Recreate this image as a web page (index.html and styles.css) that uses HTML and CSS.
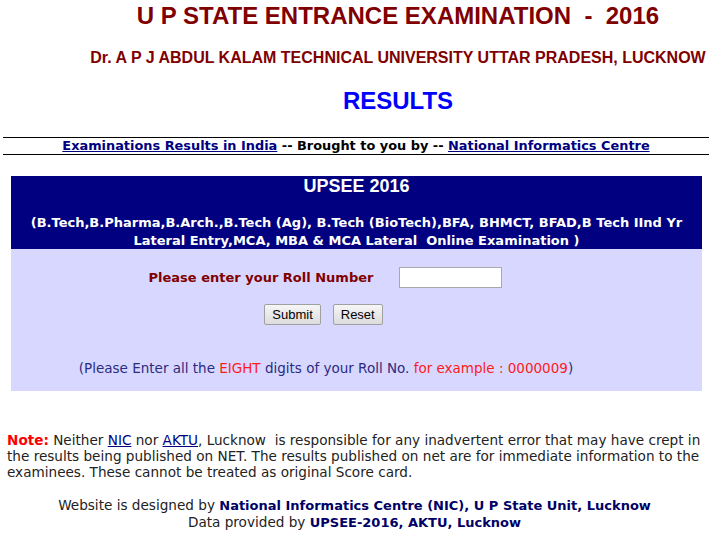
FILE: index.html
```html
<!DOCTYPE html>
<html>
<head>
<meta charset="utf-8">
<title>UPSEE 2016 Results</title>
<link rel="stylesheet" href="styles.css">
</head>
<body>
<div class="page">
  <header class="masthead">
    <h1 class="title">U P STATE ENTRANCE EXAMINATION &nbsp;-&nbsp; 2016</h1>
    <h2 class="subtitle">Dr. A P J ABDUL KALAM TECHNICAL UNIVERSITY UTTAR PRADESH, LUCKNOW</h2>
    <h3 class="results">RESULTS</h3>
  </header>

  <div class="ribbon">
    <a href="#" class="navlink">Examinations Results in India</a> -- Brought to you by -- <a href="#" class="navlink">National Informatics Centre</a>
  </div>

  <div class="panel">
    <div class="panel-head">
      <div class="exam-name">UPSEE 2016</div>
      <div class="courses">(B.Tech,B.Pharma,B.Arch.,B.Tech (Ag), B.Tech (BioTech),BFA, BHMCT, BFAD,B Tech IInd Yr Lateral Entry,MCA, MBA &amp; MCA Lateral&nbsp; Online Examination )</div>
    </div>
    <form class="panel-body">
      <div class="roll-row">
        <label class="roll-label" for="roll">Please enter your Roll Number</label>
        <input type="text" id="roll" class="roll-input">
      </div>
      <div class="btn-row">
        <button type="button" class="btn">Submit</button>
        <button type="reset" class="btn">Reset</button>
      </div>
      <p class="hint">(Please Enter all the <span class="red">EIGHT</span> digits of your Roll No. <span class="red">for example : 0000009</span>)</p>
    </form>
  </div>

  <p class="note"><span class="note-key">Note:</span> Neither <a href="#" class="inlink">NIC</a> nor <a href="#" class="inlink">AKTU</a>, Lucknow&nbsp; is responsible for any inadvertent error that may have crept in the results being published on NET. The results published on net are for immediate information to the examinees. These cannot be treated as original Score card.</p>

  <footer class="footer">
    <div>Website is designed by <b class="strong">National Informatics Centre (NIC), U P State Unit, Lucknow</b></div>
    <div>Data provided by <b class="strong">UPSEE-2016, AKTU, Lucknow</b></div>
  </footer>
</div>
</body>
</html>
```

FILE: styles.css
```css
html, body {
  margin: 0;
  padding: 0;
  background: #ffffff;
}
body {
  font-family: "DejaVu Sans", Verdana, sans-serif;
  font-size: 13.6px;
  color: #222222;
}
.page {
  width: 709px;
}
.masthead {
  padding-left: 87px;
  text-align: center;
  font-family: "Liberation Sans", Arial, sans-serif;
}
.title {
  margin: 0;
  padding-top: 3px;
  font-size: 24px;
  line-height: 26px;
  color: #800000;
  font-weight: bold;
}
.subtitle {
  margin: 20px 0 0;
  font-size: 16px;
  line-height: 18px;
  color: #800000;
  font-weight: bold;
}
.results {
  margin: 21px 0 0;
  font-size: 24px;
  line-height: 26px;
  color: #0000ff;
  font-weight: bold;
}
.ribbon {
  margin: 23px 0 0 3px;
  border-top: 1px solid #000;
  border-bottom: 1px solid #000;
  text-align: center;
  font-weight: bold;
  font-size: 12.9px;
  line-height: 16px;
  color: #000;
}
.navlink {
  color: #000080;
  text-decoration: underline;
}
.panel {
  margin: 21px 7px 0 11px;
  width: 691px;
}
.panel-head {
  background: #000080;
  color: #fff;
  text-align: center;
  height: 73px;
  font-weight: bold;
  font-size: 13px;
}
.exam-name {
  font-family: "Liberation Sans", Arial, sans-serif;
  font-size: 18px;
  line-height: 20px;
}
.courses {
  padding: 18px 4px 0;
  line-height: 18px;
}
.panel-body {
  background: #d7d7ff;
  height: 142px;
  margin: 0;
  display: flex;
  flex-direction: column;
  align-items: center;
}
.roll-row {
  display: flex;
  align-items: center;
  margin-top: 18px;
  margin-left: -62px;
}
.roll-label {
  font-weight: bold;
  font-size: 13px;
  color: #800000;
  margin-right: 26px;
}
.roll-input {
  width: 103px;
  height: 21px;
  box-sizing: border-box;
  border: 1px solid #a9a9a9;
  background: #fff;
  padding: 1px 2px;
}
.btn-row {
  display: flex;
  gap: 12px;
  margin-top: 16px;
  margin-left: -66px;
}
.btn {
  font-family: "Liberation Sans", Arial, sans-serif;
  font-size: 13px;
  color: #000;
  height: 21px;
  padding: 0 7px;
  border: 1px solid #a0a0a0;
  border-radius: 2px;
  background: linear-gradient(#f6f6f6, #dcdcdc);
}
.hint {
  margin: 35px 0 0 -61px;
  color: #2b2b80;
  font-size: 13.5px;
  line-height: 16px;
}
.red {
  color: #ff1a1a;
}
.note {
  margin: 41px 0 0 7px;
  line-height: 16px;
  width: 702px;
}
.note-key {
  color: #ff0000;
  font-weight: bold;
}
.inlink {
  color: #000080;
}
.footer {
  margin-top: 17px;
  text-align: center;
  line-height: 16px;
}
.strong {
  color: #000066;
  font-size: 13px;
}
```
